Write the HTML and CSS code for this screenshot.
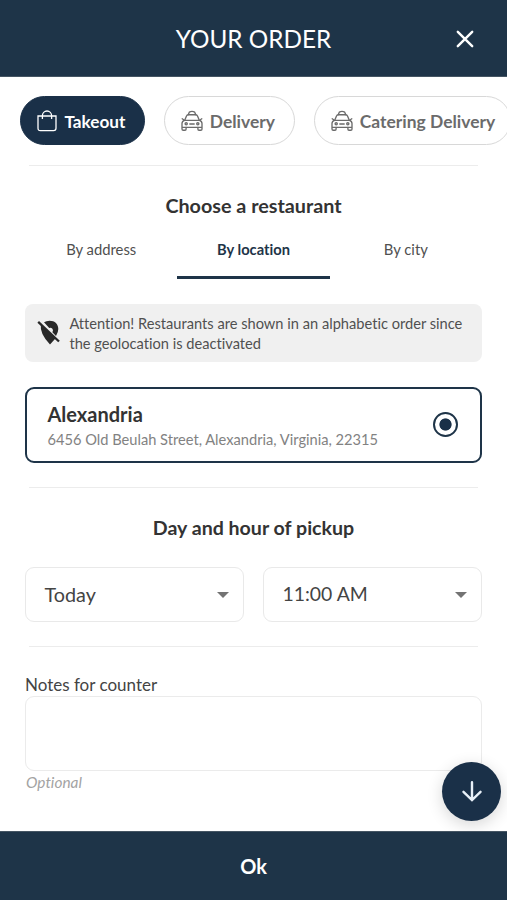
FILE: index.html
```html
<!DOCTYPE html>
<html lang="en">
<head>
<meta charset="utf-8">
<title>Your order</title>
<link rel="stylesheet" href="styles.css">
</head>
<body>
<svg class="symbols" aria-hidden="true">
  <symbol id="taxi" viewBox="0 0 22 22">
    <g fill="none" stroke="currentColor" stroke-width="1.35" stroke-linejoin="round" stroke-linecap="round">
      <path d="M7.2 4.7 8.3 2.2Q11 .6 13.7 2.2L14.8 4.7"/>
      <path d="M3.6 10.4 5.6 5.8Q6 4.7 7.2 4.7H14.8Q16 4.7 16.4 5.8L18.4 10.4Z"/>
      <path d="M3.6 10.4Q1 11 1 13.6V19Q1 20.2 2.2 20.2H4Q5.1 20.2 5.1 19V17.4H16.9V19Q16.9 20.2 18 20.2H19.8Q21 20.2 21 19V13.6Q21 11 18.4 10.4M1 17.4H5M17 17.4H21M3.4 10.2 1.2 8.8M18.6 10.2 20.8 8.8M8.8 14H13.2"/>
      <circle cx="5.2" cy="13.8" r="1.1"/><circle cx="16.8" cy="13.8" r="1.1"/>
    </g>
  </symbol>
</svg>
<div class="app">
  <header class="header">
    <h1 class="title">YOUR ORDER</h1>
    <button class="close" aria-label="Close"><svg width="18" height="18" viewBox="0 0 18 18"><path d="M1.8 1.8 16.2 16.2M16.2 1.8 1.8 16.2" stroke="currentColor" stroke-width="2.4" stroke-linecap="round"/></svg></button>
  </header>
  <main class="main">
    <nav class="chips">
      <button class="chip chip-active"><svg class="bag" width="20" height="22" viewBox="0 0 20 22" fill="none" stroke="currentColor" stroke-width="1.3"><path d="M1 6H19V18.3Q19 20.7 16.6 20.7H3.4Q1 20.7 1 18.3ZM5.4 9V5.6A4.6 4.6 0 0 1 14.6 5.6V9"/></svg><span>Takeout</span></button>
      <button class="chip"><svg class="taxi"><use href="#taxi"/></svg><span>Delivery</span></button>
      <button class="chip chip-wide"><svg class="taxi"><use href="#taxi"/></svg><span>Catering Delivery</span></button>
    </nav>
    <section class="section">
      <h2 class="heading choose">Choose a restaurant</h2>
      <div class="tabs">
        <button class="tab">By address</button>
        <button class="tab tab-active">By location</button>
        <button class="tab">By city</button>
      </div>
      <div class="notice">
        <svg class="pin" width="24" height="26" viewBox="0 0 24 26"><path d="M7 3.3Q9.3 1.8 12.5 1.8C18 1.8 21.3 5.2 21.3 10Q21.3 13.2 19 17L15.4 13.2Q16.6 11.3 15.4 9.8Q14 8.3 12.2 9ZM3.8 5.6 18.4 19.6 13 25.5Q2.6 15 3.8 5.6Z" fill="currentColor"/><path d="M1.2 2.8 22 22.5" stroke="currentColor" stroke-width="2.3"/></svg>
        <p class="notice-text">Attention! Restaurants are shown in an alphabetic order since<br>the geolocation is deactivated</p>
      </div>
      <div class="card">
        <div>
          <h3 class="name">Alexandria</h3>
          <p class="address">6456 Old Beulah Street, Alexandria, Virginia, 22315</p>
        </div>
        <span class="radio"></span>
      </div>
    </section>
    <section class="section pickup">
      <h2 class="heading">Day and hour of pickup</h2>
      <div class="selects">
        <div class="select"><span>Today</span><i class="caret"></i></div>
        <div class="select"><span class="time">11:00 AM</span><i class="caret"></i></div>
      </div>
    </section>
    <section class="section notes">
      <label class="label" for="notes">Notes for counter</label>
      <textarea class="textarea" id="notes"></textarea>
      <p class="hint">Optional</p>
    </section>
  </main>
  <button class="down" aria-label="Scroll down"><svg width="20" height="21" viewBox="0 0 20 21" fill="none" stroke="currentColor" stroke-width="2.4" stroke-linecap="round"><path d="M10 1.2V18.8M1.5 10.8 10 19 18.5 10.8"/></svg></button>
  <button class="footer">Ok</button>
</div>
</body>
</html>
```
FILE: styles.css
```css
* { box-sizing: border-box; }
body, h1, h2, h3, p { margin: 0; }
body { font-family: Lato, "Liberation Sans", sans-serif; font-variant-ligatures: none; color: #333; background: #fff; overflow: hidden; }
button { font: inherit; color: inherit; background: none; border: 0; padding: 0; margin: 0; }
svg { display: block; flex: none; }
.symbols { position: absolute; width: 0; height: 0; }
.app { position: relative; display: flex; flex-direction: column; width: 507px; height: 900px; overflow: hidden; }
.header { display: grid; grid-template-columns: 84px 1fr 84px; align-items: center; height: 77px; flex: none; background: #1e3448; border-bottom: 1px solid #455563; color: #fff; padding-top: 2px; }
.title { grid-column: 2; text-align: center; font-size: 24.3px; line-height: 30px; font-weight: 400; }
.close { justify-self: center; }
.main { flex: 1; min-height: 0; }
.chips { display: flex; gap: 19px; padding: 19px 0 19px 20.4px; height: 87px; }
.chip { display: flex; align-items: center; flex: none; width: 131px; height: 49px; padding-left: 16px; border: 1px solid #d8d8d8; border-radius: 25px; font-size: 17.45px; font-weight: 700; color: #6b6b6b; white-space: nowrap; }
.chip span { margin-left: 6.4px; padding-top: 2px; }
.chip-active { width: 125px; background: #1a3048; border-color: #1a3048; color: #fff; font-size: 17.2px; }
.chip-active span { margin-left: 7px; }
.chip-wide { width: 197px; }
.taxi { width: 22px; height: 22px; }
.section::before { content: ""; display: block; height: 1px; margin: 0 4px; background: #ececec; }
.section { margin: 0 25px; padding-top: 1px; }
.heading { margin-top: 28px; font-size: 19.6px; line-height: 24px; font-weight: 700; text-align: center; }
.choose { font-size: 19.75px; }
.tabs { display: grid; grid-template-columns: repeat(3, 1fr); margin-top: 12px; height: 49px; }
.tab { padding-bottom: 9px; font-size: 14.8px; color: #505050; border-bottom: 3px solid transparent; }
.tab-active { font-weight: 700; font-size: 14.7px; color: #1e3448; border-color: #1e3448; }
.notice { display: flex; margin-top: 25px; height: 58px; padding: 10px 12px; border-radius: 8px; background: #f0f0f0; }
.pin { margin-top: 5px; color: #292929; }
.notice-text { margin-left: 8.4px; font-size: 14.65px; line-height: 19.5px; white-space: nowrap; color: #505050; }
.card { display: flex; justify-content: space-between; margin-top: 25px; height: 76px; padding: 13px 22px 0 20.5px; border: 2px solid #1e3448; border-radius: 9px; }
.name { font-size: 20px; line-height: 24px; font-weight: 700; }
.address { margin-top: 4px; font-size: 14.65px; line-height: 20px; color: #828282; white-space: nowrap; }
.radio { width: 25px; height: 25px; margin-top: 10px; border: 2px solid #1e3448; border-radius: 50%; background: radial-gradient(circle, #1a3048 0 5.7px, transparent 6.5px); }
.pickup { margin-top: 23px; }
.selects { display: grid; grid-template-columns: 1fr 1fr; gap: 19px; margin-top: 27px; }
.select { display: flex; align-items: center; justify-content: space-between; height: 55px; padding: 0 14px 2px 18.5px; border: 1px solid #e9e9e9; border-radius: 9px; font-size: 19.8px; color: #444; }
.time { font-size: 19.4px; }
.caret { border: 6px solid transparent; border-top-color: #737373; border-bottom: 0; margin-top: 2px; }
.notes { margin-top: 23px; }
.label { display: block; margin-top: 27px; font-size: 17px; line-height: 22px; color: #444; }
.textarea { display: block; width: 100%; height: 75px; border: 1px solid #ebebeb; border-radius: 9px; resize: none; background: #fff; }
.hint { margin: 1px 0 0 1px; font-size: 15.4px; line-height: 20px; font-style: italic; color: #a3a3a3; }
.down { position: absolute; left: 442.4px; top: 762px; z-index: 1; width: 59px; height: 59px; display: grid; place-items: center; border-radius: 50%; background: #1a3048; color: #e8f0f8; box-shadow: 0 4px 16px rgba(0,0,0,.16); }
.footer { position: relative; z-index: 2; flex: none; height: 69px; background: #1e3448; border-top: 1px solid #455563; color: #fff; font-size: 20px; font-weight: 700; }
```
